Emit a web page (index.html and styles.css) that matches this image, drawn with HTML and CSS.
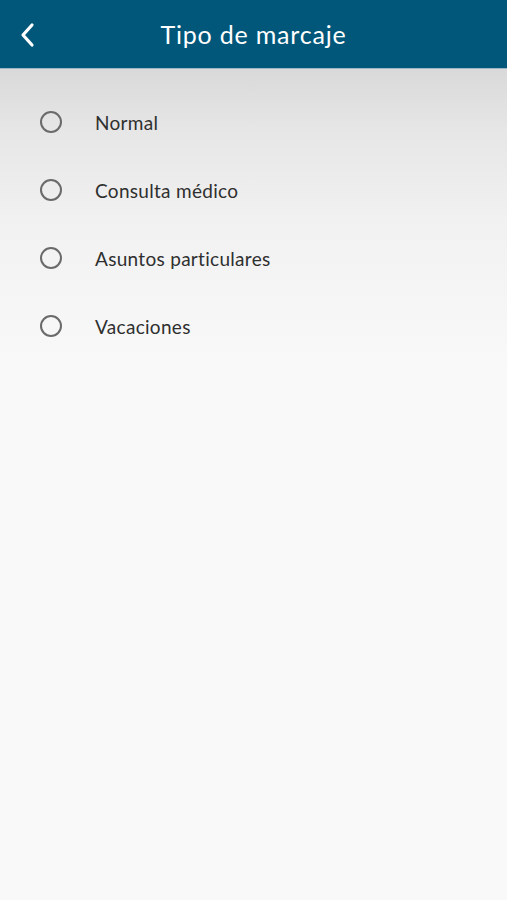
FILE: index.html
```html
<!DOCTYPE html>
<html lang="es">
<head>
    <meta charset="UTF-8">
    <meta name="viewport" content="width=device-width, initial-scale=1.0">
    <link rel="stylesheet" href="styles.css">
    <title>Tipo de marcaje</title>
</head>
<body>
<div class="header">
    <button class="back" type="button" aria-label="Volver">
        <svg width="18" height="26" viewBox="0 0 18 26"><path d="M14 3 L5 13 L14 23" fill="none" stroke="#fff" stroke-width="3.2" stroke-linecap="round" stroke-linejoin="round"/></svg>
    </button>
    <div class="title">Tipo de marcaje</div>
</div>

<div class="content">
    <label class="option"><span class="radio"></span><span class="text">Normal</span></label>
    <label class="option"><span class="radio"></span><span class="text">Consulta médico</span></label>
    <label class="option"><span class="radio"></span><span class="text">Asuntos particulares</span></label>
    <label class="option"><span class="radio"></span><span class="text">Vacaciones</span></label>
</div>
</body>
</html>
```

FILE: styles.css
```css
/* Global */
* {
    box-sizing: border-box;
    margin: 0;
}

body {
    font-family: Lato, "Open Sans", sans-serif;
    background: #f9f9f9;
    height: 900px;
    overflow: hidden;
}

/* Header */
.header {
    height: 69px;
    background: #00577a;
    display: flex;
    align-items: center;
    justify-content: center;
    position: relative;
    border-bottom: 1px solid #9ab7c6;
}

.back {
    position: absolute;
    left: 14px;
    top: 21px;
    border: 0;
    background: none;
    padding: 0;
    width: 26px;
    height: 28px;
    display: flex;
    align-items: center;
    justify-content: center;
}

.title {
    color: #fff;
    font-family: Lato, "Open Sans", sans-serif;
    font-size: 25px;
    letter-spacing: 0.8px;
}

/* List */
.content {
    background: linear-gradient(#d9d9d9 0px, #e6e6e6 60px, #f1f1f1 150px, #f9f9f9 300px);
    height: 831px;
    padding-top: 19px;
    display: flex;
    flex-direction: column;
}

.option {
    display: flex;
    align-items: center;
    height: 68px;
    padding-left: 40px;
}

.radio {
    width: 22px;
    height: 22px;
    border: 2px solid #6a6a6a;
    border-radius: 50%;
    margin-right: 33px;
}

.text {
    font-size: 19px;
    letter-spacing: 0.3px;
    color: #2f2f2f;
}
```
